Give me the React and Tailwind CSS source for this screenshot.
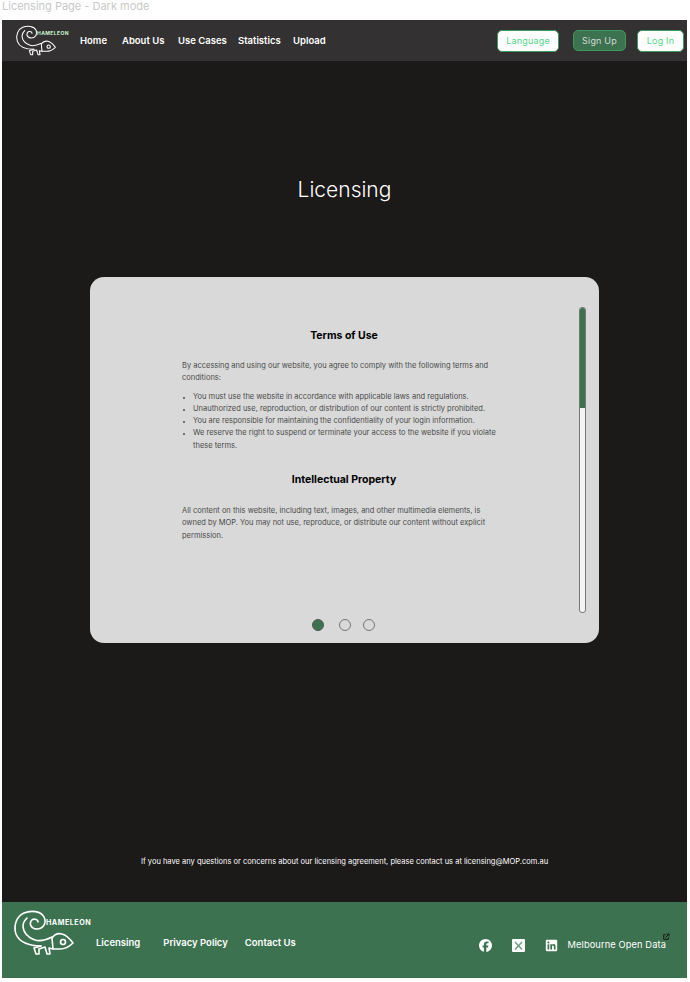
import { FaFacebook, FaLinkedin } from 'react-icons/fa6';

const font = { fontFamily: 'Inter' };

function Logo({ className, textClass, textColor }) {
  return (
    <div className={`relative shrink-0 ${className}`}>
      <svg className="w-full h-full overflow-visible" viewBox="0 0 60 45" fill="none" stroke="white" strokeWidth="1.6" strokeLinecap="round" strokeLinejoin="round">
        {/* spiral tail */}
        <path d="M27 35 C15 35 5 31 2 23 C-1 14 3 5 10 2 C17 -1 27 0 30 6 C33 12 29 18 23 18 C18 18 15 14 17 10 C19 7 24 8 24 11" />
        <path d="M38 26 C32 29 27 31 21 29 C14 27 9 21 9 15 C9 12 11 9 13 7" />
        {/* head */}
        <path d="M38 27 C40 24 44 22 48 23 C52 24 56 28 59 32 C55 36 50 38 46 38 C43 38 41 38 39 38 L38 27" />
        <circle cx="49" cy="31" r="2.5" />
        {/* legs */}
        <path d="M27 35 L20 37 L22 43 L25 43 L25 38 L31 36 L33 43 L36 43 L35 37 L39 38" />
      </svg>
      <span className={`absolute font-bold leading-none whitespace-nowrap ${textClass} ${textColor}`} style={font}>HAMELEON</span>
    </div>
  );
}

export default function App() {
  return (
    <div className="h-[982px] w-[690px] overflow-hidden bg-white" style={{ fontFamily: 'Inter, sans-serif' }}>
      <div className="h-5 pl-[2px] text-[11px] leading-[13px] text-[#c8c8c8]">Licensing Page - Dark mode</div>

      <div className="ml-[2px] w-[685px]">
        {/* nav */}
        <header className="flex h-[41px] items-center bg-[#333131] pl-[13px] pr-[3px]">
          <Logo className="h-[30px] w-[42px]" textClass="left-[22px] top-[5px] text-[5px] tracking-[0.4px]" textColor="text-[#c9f7d2]" />
          <nav className="mt-[1px] ml-[23px] flex text-[9.5px] font-semibold whitespace-nowrap text-white">
            <a className="w-[42px]">Home</a>
            <a className="w-[56px]">About Us</a>
            <a className="w-[60px]">Use Cases</a>
            <a className="w-[55px]">Statistics</a>
            <a>Upload</a>
          </nav>
          <div className="ml-auto flex items-center text-[9px] tracking-[0.2px]">
            <button className="h-[22px] w-[62px] rounded-[5px] border border-[#3c9a5f] bg-white text-[#4fd487]">Language</button>
            <button className="ml-[14px] h-[21px] w-[53px] rounded-[5px] border border-[#3c9a5f] bg-[#3c724f] text-[#d8d8d8]">Sign Up</button>
            <button className="ml-[11px] h-[22px] w-[47px] rounded-[5px] border border-[#3c9a5f] bg-white text-[#4fd487]">Log In</button>
          </div>
        </header>

        {/* main */}
        <main className="flex h-[841px] flex-col items-center bg-[#1c1919]">
          <h1 className="mt-[115px] h-7 text-[21px] leading-7 font-light text-white">Licensing</h1>

          <section className="mt-[73px] flex h-[366px] w-[509px] rounded-[14px] bg-[#d9d9d9] pt-[30px] pl-[92px]">
            <div className="flex w-[397px] flex-col pt-[21px]">
              <div className="w-[324px] text-[7.5px] leading-[12.3px] text-[#4a4a4a]">
                <h2 className="mb-[16px] text-center text-[10.5px] leading-[16px] font-bold text-black">Terms of Use</h2>
                <p>By accessing and using our website, you agree to comply with the following terms and conditions:</p>
                <ul className="mt-[6px] list-disc pl-[11px] marker:text-[5px]">
                  <li>You must use the website in accordance with applicable laws and regulations.</li>
                  <li>Unauthorized use, reproduction, or distribution of our content is strictly prohibited.</li>
                  <li>You are responsible for maintaining the confidentiality of your login information.</li>
                  <li>We reserve the right to suspend or terminate your access to the website if you violate these terms.</li>
                </ul>
                <h2 className="mt-[20px] mb-[17px] text-center text-[10.5px] leading-[16px] font-bold text-black">Intellectual Property</h2>
                <p>All content on this website, including text, images, and other multimedia elements, is owned by MOP. You may not use, reproduce, or distribute our content without explicit permission.</p>
              </div>
              <div className="mt-auto mb-[12px] ml-[130px] flex items-center">
                <span className="h-3 w-3 rounded-full border border-[#555] bg-[#3c724f]" />
                <span className="ml-[15px] h-3 w-3 rounded-full border border-[#777]" />
                <span className="ml-[12px] h-3 w-3 rounded-full border border-[#777]" />
              </div>
            </div>
            <div className="h-[306px] w-[7px] overflow-hidden rounded-[3px] border border-[#777] bg-[#f4f4f4]">
              <div className="h-[100px] bg-[#3c724f]" />
            </div>
          </section>

          <p className="mt-[213px] text-[7.5px] leading-3 text-white">If you have any questions or concerns about our licensing agreement, please contact us at licensing@MOP.com.au</p>
        </main>

        {/* footer */}
        <footer className="flex h-[76px] bg-[#3c724f] pl-3 pr-[21px]">
          <Logo className="mt-[9px] h-[45px] w-[60px]" textClass="left-[32px] top-[8px] text-[7.2px] tracking-[0.5px]" textColor="text-white" />
          <nav className="mt-[34px] ml-[22px] flex h-[13px] gap-[17px] text-[9.5px] leading-[13px] font-semibold text-white">
            <a className="mr-[6px]">Licensing</a>
            <a>Privacy Policy</a>
            <a>Contact Us</a>
          </nav>
          <div className="relative mt-[36px] ml-auto flex h-[14px] items-center text-white">
            <FaFacebook className="h-[13px] w-[13px]" />
            <svg className="ml-5 h-[13px] w-[13px]" viewBox="0 0 13 13">
              <rect width="13" height="13" rx="1" fill="white" />
              <path d="M3 3 L10 10.5 M10 3 L3 10.5" stroke="#6f9a7f" strokeWidth="1.4" />
            </svg>
            <FaLinkedin className="ml-5 h-[13px] w-[13px]" />
            <span className="ml-[10px] text-[9.3px] tracking-[0.1px]">Melbourne Open Data</span>
            <svg className="absolute -top-[5px] -right-[4px] h-2 w-2" viewBox="0 0 24 24" fill="none" stroke="#1c1919" strokeWidth="3">
              <path d="M11 5H5v14h14v-6M10 14 21 3M14 3h7v7" />
            </svg>
          </div>
        </footer>
      </div>
    </div>
  );
}
